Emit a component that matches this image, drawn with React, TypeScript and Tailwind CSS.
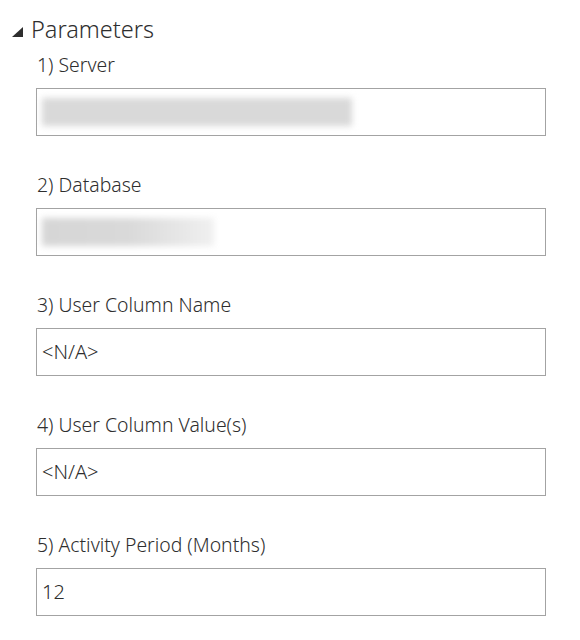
import React from 'react';

type Param = {
  label: string;
  value?: string;
  blur?: { width: number; fade?: boolean };
};

const PARAMS: Param[] = [
  { label: '1) Server', blur: { width: 310 } },
  { label: '2) Database', blur: { width: 172, fade: true } },
  { label: '3) User Column Name', value: '<N/A>' },
  { label: '4) User Column Value(s)', value: '<N/A>' },
  { label: '5) Activity Period (Months)', value: '12' },
];

const font = { fontFamily: '"Noto Sans", "Open Sans", sans-serif' };

export default function App() {
  return (
    <div className="w-[580px] h-[640px] bg-white text-[#2e2e2e] overflow-hidden" style={font}>
      {/* Section header */}
      <div className="flex items-center pl-[12px] pt-[14px] h-[46px]">
        <svg width="11" height="10" viewBox="0 0 11 10" className="mr-[8px] mt-[3px]">
          <polygon points="11,0 11,10 0,10" fill="#2e2e2e" />
        </svg>
        <span className="text-[23.5px] leading-none font-light">Parameters</span>
      </div>

      <div className="flex flex-col pl-[36px] pr-[34px]">
        {PARAMS.map((p) => (
          <div key={p.label} className="flex flex-col pb-[30px]">
            <div className="text-[19.4px] leading-[22px] font-light pl-[1px] pt-[8px] pb-[12px]">{p.label}</div>
            <div className="h-[48px] border border-[#a3a3a3] flex items-center pl-[5px]">
              {p.value && <span className="text-[20px] font-light">{p.value}</span>}
              {p.blur && (
                <div
                  className={`h-[28px] blur-[3px] ${p.blur.fade ? 'bg-gradient-to-r from-[#d6d6d6] via-[#d9d9d9] to-[#f0f0f0]' : 'bg-[#d9d9d9]'}`}
                  style={{ width: p.blur.width }}
                />
              )}
            </div>
          </div>
        ))}
      </div>
    </div>
  );
}
